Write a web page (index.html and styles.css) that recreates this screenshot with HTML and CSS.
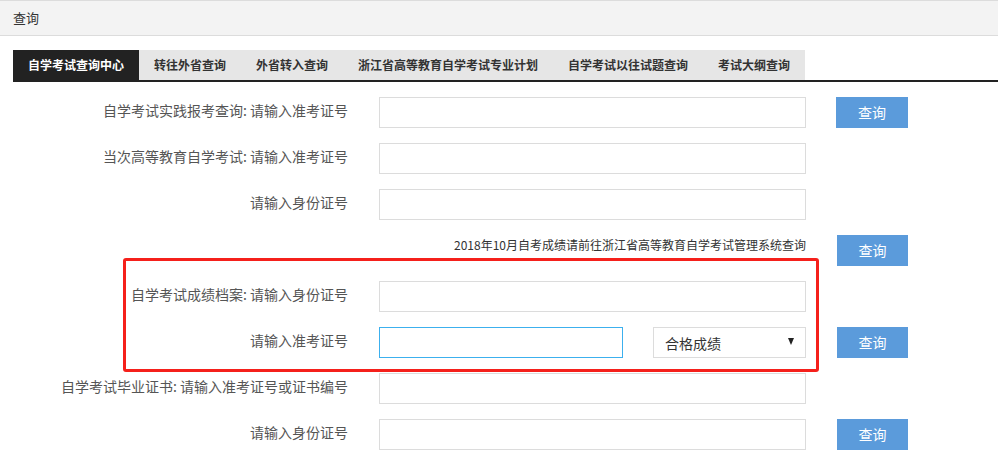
FILE: index.html
```html
<!DOCTYPE html>
<html lang="zh-CN">
<head>
<meta charset="utf-8">
<title>查询</title>
<link rel="stylesheet" href="styles.css">
</head>
<body>
<div class="page-header">查询</div>
<div class="tabs">
  <div class="tab active">自学考试查询中心</div>
  <div class="tab">转往外省查询</div>
  <div class="tab">外省转入查询</div>
  <div class="tab">浙江省高等教育自学考试专业计划</div>
  <div class="tab">自学考试以往试题查询</div>
  <div class="tab">考试大纲查询</div>
</div>
<div class="form">
  <div class="label">自学考试实践报考查询: 请输入准考证号</div>
  <div class="input"></div>
  <div class="btn">查询</div>

  <div class="label">当次高等教育自学考试: 请输入准考证号</div>
  <div class="input"></div>
  <div></div>

  <div class="label">请输入身份证号</div>
  <div class="input"></div>
  <div></div>

  <div class="notice">2018年10月自考成绩请前往浙江省高等教育自学考试管理系统查询</div>
  <div class="btn">查询</div>

  <div class="label">自学考试成绩档案: 请输入身份证号</div>
  <div class="input"></div>
  <div></div>

  <div class="label">请输入准考证号</div>
  <div class="pair">
    <div class="input focus"></div>
    <div class="select"><span>合格成绩</span><span class="arrow"></span></div>
  </div>
  <div class="btn">查询</div>

  <div class="label">自学考试毕业证书: 请输入准考证号或证书编号</div>
  <div class="input"></div>
  <div></div>

  <div class="label">请输入身份证号</div>
  <div class="input"></div>
  <div class="btn">查询</div>

  <div class="highlight"></div>
</div>
</body>
</html>
```

FILE: styles.css
```css
* { box-sizing: border-box; }
body {
  margin: 0;
  background: #fff;
  font-family: "Noto Sans CJK SC", "Noto Sans", sans-serif;
  color: #333;
}
.page-header {
  height: 36px;
  background: #f3f3f3;
  border-top: 1px solid #dcdcdc;
  border-bottom: 1px solid #dcdcdc;
  padding-left: 13px;
  font-size: 13px;
  line-height: 33px;
  color: #333;
}
.tabs {
  display: flex;
  margin: 14px 0 0 13px;
  border-bottom: 2px solid #222;
}
.tab {
  height: 30px;
  line-height: 30px;
  padding: 0 15px;
  background: #e6e6e6;
  font-size: 12px;
  font-weight: bold;
  color: #333;
}
.tab.active {
  background: #222;
  color: #fff;
}
.form {
  position: relative;
  display: grid;
  grid-template-columns: 348px 427px 71px;
  column-gap: 31px;
  grid-auto-rows: 31px;
  row-gap: 15px;
  margin-top: 15px;
}
.form > :nth-child(3n) { margin-left: -1px; }
.label {
  text-align: right;
  font-size: 14px;
  line-height: 26px;
  color: #555;
  white-space: nowrap;
}
.input {
  border: 1px solid #dcdcdc;
  background: #fff;
  height: 31px;
}
.input.focus {
  border-color: #3cb0ee;
  width: 244px;
}
.pair {
  display: flex;
  justify-content: space-between;
}
.select {
  width: 153px;
  height: 31px;
  border: 1px solid #dcdcdc;
  display: flex;
  align-items: center;
  justify-content: space-between;
  padding: 0 11px 0 11px;
  font-size: 14px;
  color: #333;
}
.arrow {
  width: 0;
  height: 0;
  border-left: 3.5px solid transparent;
  border-right: 3.5px solid transparent;
  border-top: 7px solid #222;
  margin-top: -2px;
}
.btn {
  background: #5b9bdb;
  color: #fff;
  font-size: 14px;
  line-height: 31px;
  text-align: center;
}
.notice {
  grid-column: 1 / 3;
  text-align: right;
  font-size: 12px;
  line-height: 20px;
  color: #333;
}
.form > .notice + .btn { margin-left: 0; }
.highlight {
  position: absolute;
  left: 124px;
  top: 161px;
  width: 696px;
  height: 114px;
  border: 3px solid #f5201b;
  border-radius: 3px;
  pointer-events: none;
}
```
